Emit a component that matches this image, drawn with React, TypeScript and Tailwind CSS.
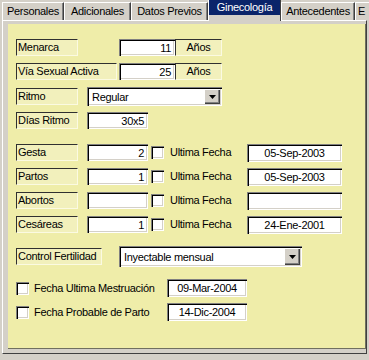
import React from "react";

const sunken =
  "bg-white shadow-[inset_1px_1px_0_#808080,inset_2px_2px_0_#000,inset_-1px_-1px_0_#fff,inset_-2px_-2px_0_#d4d0c8]";

function Label({ w, children, center }: { w: string; children: React.ReactNode; center?: boolean }) {
  return (
    <div
      className={`h-[17px] ${w} shrink-0 bg-[#f2f0bc] border border-t-[#303030] border-l-[#303030] border-r-[#fbfae2] border-b-[#fbfae2] flex items-center ${
        center ? "justify-center" : "pl-[1px]"
      } leading-none`}
    >
      {children}
    </div>
  );
}

function Num({ w, v }: { w: string; v: string }) {
  return (
    <div className={`h-[17px] ${w} shrink-0 ${sunken} flex items-center justify-end pr-[4px] pt-[1px]`}>{v}</div>
  );
}

function DateBox({ w, v }: { w: string; v: string }) {
  return (
    <div className={`h-[18px] ${w} shrink-0 ${sunken} flex items-center justify-center pt-[1px]`}>{v}</div>
  );
}

function Check() {
  return <div className={`w-[13px] h-[13px] shrink-0 ${sunken}`} />;
}

function Select({ w, h, v }: { w: string; h: string; v: string }) {
  return (
    <div className={`${h} ${w} shrink-0 ${sunken} flex items-center p-[2px]`}>
      <div className="flex-1 pl-[3px] pt-[1px]">{v}</div>
      <div className="w-[16px] h-full bg-[#d4d0c8] shadow-[inset_1px_1px_0_#fff,inset_-1px_-1px_0_#404040,inset_-2px_-2px_0_#808080] flex items-center justify-center">
        <svg width="7" height="4" viewBox="0 0 7 4">
          <path d="M0 0H7L3.5 4Z" fill="#000" />
        </svg>
      </div>
    </div>
  );
}

function Tab({ w, children }: { w: string; children: React.ReactNode }) {
  return (
    <div
      className={`h-[18px] ${w} shrink-0 border-t border-l border-white border-r border-r-[#404040] shadow-[inset_-1px_0_0_#808080] flex items-center justify-center pb-[1px]`}
    >
      {children}
    </div>
  );
}

function FechaRow({ label, n, date, mt }: { label: string; n: string; date: string; mt: string }) {
  return (
    <div className={`flex items-center h-[19px] ${mt}`}>
      <Label w="w-[62px]">{label}</Label>
      <div className="ml-[9px]">
        <Num w="w-[61px]" v={n} />
      </div>
      <div className="ml-[3px]">
        <Check />
      </div>
      <div className="ml-[6px] w-[77px] shrink-0">Ultima Fecha</div>
      <DateBox w="w-[95px]" v={date} />
    </div>
  );
}

export default function App() {
  return (
    <div className="w-[369px] h-[360px] overflow-hidden bg-[#d4d0c8] text-black text-[11px] tracking-[-0.3px] font-['Liberation_Sans',Arial,sans-serif]">
      <div className="flex items-end h-[20px] pl-[2px]">
        <Tab w="w-[62px]">Personales</Tab>
        <Tab w="w-[67px]">Adicionales</Tab>
        <Tab w="w-[77px]">Datos Previos</Tab>
        <div className="relative z-10 h-[21px] -mb-px w-[73px] shrink-0 bg-[#d4d0c8] border-l border-white border-r border-r-[#404040] flex flex-col">
          <div className="h-[15px] bg-[#0a246a] text-white flex items-center justify-center">Ginecología</div>
        </div>
        <Tab w="w-[74px]">Antecedentes</Tab>
        <Tab w="w-[40px]">
          <span className="pl-[2px] w-full">E</span>
        </Tab>
      </div>
      <div className="ml-[2px] w-[365px] h-[334px] border-t border-l border-white border-r border-b border-r-[#404040] border-b-[#404040] pt-[3px] pl-[5px]">
        <div className="w-[358px] h-[325px] bg-[#efeda9] border-r border-b border-r-[#707060] border-b-[#707060] pl-[8px] flex flex-col">
          <div className="flex items-center h-[19px] mt-[14px]">
            <Label w="w-[62px]">Menarca</Label>
            <div className="ml-[41px] flex">
              <Num w="w-[56px]" v="11" />
              <Label w="w-[47px]" center>
                Años
              </Label>
            </div>
          </div>
          <div className="flex items-center h-[19px] mt-[5px]">
            <Label w="w-[101px]">Vía Sexual Activa</Label>
            <div className="ml-[2px] flex">
              <Num w="w-[56px]" v="25" />
              <Label w="w-[47px]" center>
                Años
              </Label>
            </div>
          </div>
          <div className="flex items-center h-[19px] mt-[6px]">
            <Label w="w-[62px]">Ritmo</Label>
            <div className="ml-[9px]">
              <Select w="w-[135px]" h="h-[19px]" v="Regular" />
            </div>
          </div>
          <div className="flex items-center h-[19px] mt-[5px]">
            <Label w="w-[62px]">Días Ritmo</Label>
            <div className="ml-[9px]">
              <Num w="w-[61px]" v="30x5" />
            </div>
          </div>
          <FechaRow label="Gesta" n="2" date="05-Sep-2003" mt="mt-[13px]" />
          <FechaRow label="Partos" n="1" date="05-Sep-2003" mt="mt-[5px]" />
          <FechaRow label="Abortos" n="" date="" mt="mt-[5px]" />
          <FechaRow label="Cesáreas" n="1" date="24-Ene-2001" mt="mt-[5px]" />
          <div className="flex items-center h-[21px] mt-[12px]">
            <Label w="w-[86px]">Control Fertilidad</Label>
            <div className="ml-[17px]">
              <Select w="w-[183px]" h="h-[21px]" v="Inyectable mensual" />
            </div>
          </div>
          <div className="flex items-center h-[18px] mt-[12px]">
            <Check />
            <div className="ml-[5px] w-[133px] shrink-0">Fecha Ultima Mestruación</div>
            <DateBox w="w-[80px]" v="09-Mar-2004" />
          </div>
          <div className="flex items-center h-[18px] mt-[6px]">
            <Check />
            <div className="ml-[5px] w-[133px] shrink-0">Fecha Probable de Parto</div>
            <DateBox w="w-[80px]" v="14-Dic-2004" />
          </div>
        </div>
      </div>
    </div>
  );
}
